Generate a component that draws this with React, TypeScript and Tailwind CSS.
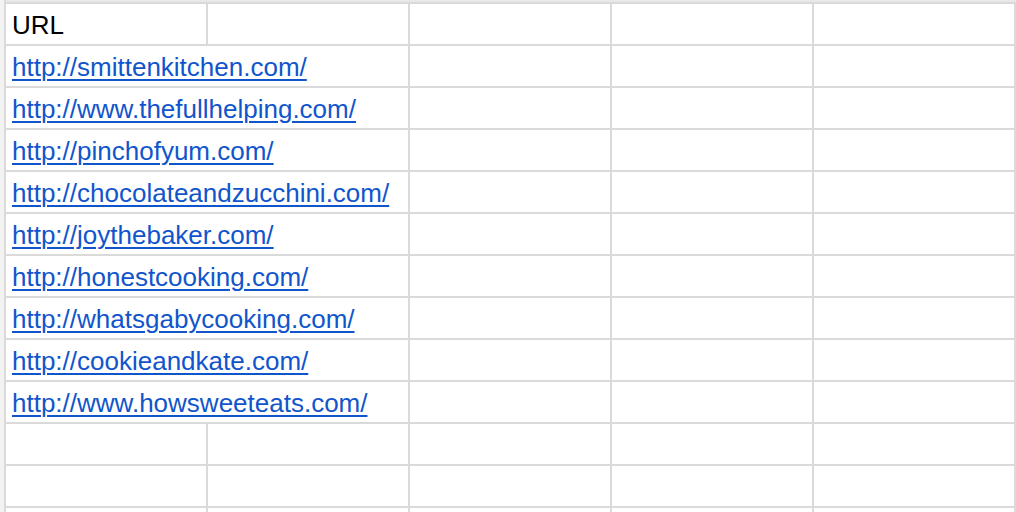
import React from 'react'

const urls = [
  'http://smittenkitchen.com/',
  'http://www.thefullhelping.com/',
  'http://pinchofyum.com/',
  'http://chocolateandzucchini.com/',
  'http://joythebaker.com/',
  'http://honestcooking.com/',
  'http://whatsgabycooking.com/',
  'http://cookieandkate.com/',
  'http://www.howsweeteats.com/',
]

function Cell({ wide, children }: { wide?: boolean; children?: React.ReactNode }) {
  return (
    <div
      className={`${wide ? 'w-[404px]' : 'w-[202px]'} shrink-0 h-[42px] border-r-2 border-b-2 border-[#dadada] px-[6px] pt-[2px] leading-[38px] whitespace-nowrap overflow-hidden`}
    >
      {children}
    </div>
  )
}

export default function App() {
  const empty = [0, 1, 2, 3, 4]

  return (
    <div className="w-[1016px] h-[512px] overflow-hidden bg-white flex font-['Liberation_Sans',Arial,sans-serif] text-[26px]">
      <div className="w-[4px] shrink-0 bg-[#f3f3f3]" />
      <div className="flex-1 border-l-2 border-[#dadada]">
        <div className="h-[2px] bg-[#e8e8e8]" />
        <div className="border-t-2 border-[#dadada]">
          <div className="flex">
            <Cell><span className="text-black">URL</span></Cell>
            {empty.slice(1).map((i) => <Cell key={i} />)}
          </div>
          {urls.map((u) => (
            <div key={u} className="flex">
              <Cell wide>
                <a href={u} className="text-[#1155cc] underline decoration-2 underline-offset-[3px]">{u}</a>
              </Cell>
              <Cell />
              <Cell />
              <Cell />
            </div>
          ))}
          {[0, 1, 2].map((r) => (
            <div key={r} className="flex">
              {empty.map((i) => <Cell key={i} />)}
            </div>
          ))}
        </div>
      </div>
    </div>
  )
}
